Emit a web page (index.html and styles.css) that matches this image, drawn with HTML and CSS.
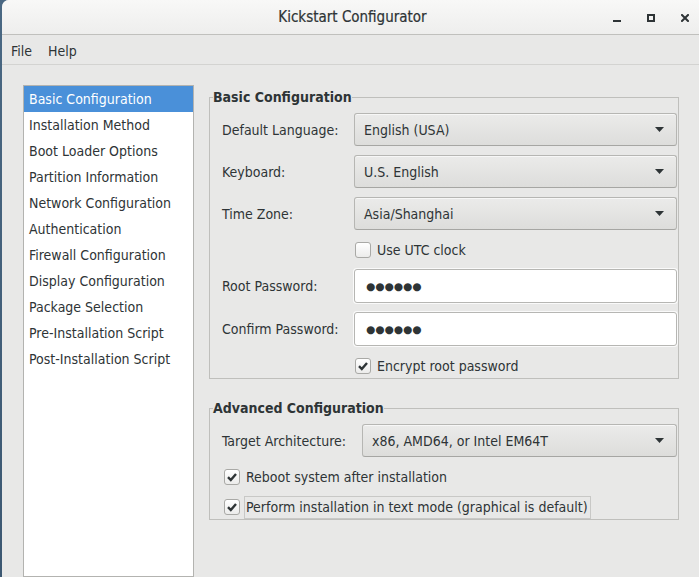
FILE: index.html
```html
<!DOCTYPE html>
<html lang="en">
<head>
<meta charset="utf-8">
<title>Kickstart Configurator</title>
<link rel="stylesheet" href="styles.css">
</head>
<body>
<div class="window">
  <header class="titlebar">
    <span class="title">Kickstart Configurator</span>
    <div class="wm-buttons">
      <svg class="wm-icon" width="8" height="8" viewBox="0 0 8 8"><rect x="0" y="6" width="8" height="2" fill="#2e3436"/></svg>
      <svg class="wm-icon" width="8" height="8" viewBox="0 0 8 8"><rect x="1" y="1" width="6" height="6" fill="none" stroke="#2e3436" stroke-width="2"/></svg>
      <svg class="wm-icon" width="8" height="8" viewBox="0 0 8 8"><path d="M1 1 L7 7 M7 1 L1 7" stroke="#2e3436" stroke-width="2" stroke-linecap="square"/></svg>
    </div>
  </header>
  <nav class="menubar">
    <span class="menu-item">File</span>
    <span class="menu-item">Help</span>
  </nav>
  <div class="content">
    <ul class="sidebar">
      <li class="selected">Basic Configuration</li>
      <li>Installation Method</li>
      <li>Boot Loader Options</li>
      <li>Partition Information</li>
      <li>Network Configuration</li>
      <li>Authentication</li>
      <li>Firewall Configuration</li>
      <li>Display Configuration</li>
      <li>Package Selection</li>
      <li>Pre-Installation Script</li>
      <li>Post-Installation Script</li>
    </ul>
    <div class="main">
      <fieldset class="frame">
        <legend>Basic Configuration</legend>
        <div class="form form-basic">
          <span class="label">Default Language:</span>
          <div class="combo"><span>English (USA)</span><svg class="arrow" width="9" height="5" viewBox="0 0 9 5"><polygon points="0,0 9,0 4.5,5" fill="#2e3436"/></svg></div>
          <span class="label">Keyboard:</span>
          <div class="combo"><span>U.S. English</span><svg class="arrow" width="9" height="5" viewBox="0 0 9 5"><polygon points="0,0 9,0 4.5,5" fill="#2e3436"/></svg></div>
          <span class="label">Time Zone:</span>
          <div class="combo"><span>Asia/Shanghai</span><svg class="arrow" width="9" height="5" viewBox="0 0 9 5"><polygon points="0,0 9,0 4.5,5" fill="#2e3436"/></svg></div>
          <div class="check-row in-field">
            <span class="check"></span><span class="check-label">Use UTC clock</span>
          </div>
          <span class="label">Root Password:</span>
          <div class="entry"><span class="dots">●●●●●●</span></div>
          <span class="label">Confirm Password:</span>
          <div class="entry"><span class="dots">●●●●●●</span></div>
          <div class="check-row in-field">
            <span class="check"><svg width="14" height="14" viewBox="0 0 14 14"><path d="M3 7.2 L5.8 10 L11 4" fill="none" stroke="#2e3436" stroke-width="2.4"/></svg></span><span class="check-label">Encrypt root password</span>
          </div>
        </div>
      </fieldset>
      <fieldset class="frame frame-adv">
        <legend>Advanced Configuration</legend>
        <div class="form form-adv">
          <span class="label">Target Architecture:</span>
          <div class="combo"><span>x86, AMD64, or Intel EM64T</span><svg class="arrow" width="9" height="5" viewBox="0 0 9 5"><polygon points="0,0 9,0 4.5,5" fill="#2e3436"/></svg></div>
          <div class="check-row full">
            <span class="check"><svg width="14" height="14" viewBox="0 0 14 14"><path d="M3 7.2 L5.8 10 L11 4" fill="none" stroke="#2e3436" stroke-width="2.4"/></svg></span><span class="check-label">Reboot system after installation</span>
          </div>
          <div class="check-row full">
            <span class="check"><svg width="14" height="14" viewBox="0 0 14 14"><path d="M3 7.2 L5.8 10 L11 4" fill="none" stroke="#2e3436" stroke-width="2.4"/></svg></span><span class="check-label focused">Perform installation in text mode (graphical is default)</span>
          </div>
        </div>
      </fieldset>
    </div>
  </div>
</div>
</body>
</html>
```
FILE: styles.css
```css
* { box-sizing: border-box; }

html, body {
  margin: 0;
  height: 577px;
  overflow: hidden;
}

body {
  background: linear-gradient(#4a6883, #3c5872);
  font-family: "DejaVu Sans Condensed", "DejaVu Sans", sans-serif;
  font-size: 14px;
  color: #2e3436;
}

.window {
  margin-left: 2px;
  height: 577px;
  background: #e8e8e7;
  border-top-left-radius: 7px;
  display: flex;
  flex-direction: column;
  overflow: hidden;
}

.titlebar {
  height: 35px;
  flex: none;
  border-bottom: 1px solid #c0c0bd;
  background: linear-gradient(#f8f8f7, #eeeeed);
  display: grid;
  grid-template-columns: 1fr auto 1fr;
  align-items: center;
}

.title {
  grid-column: 2;
  font-size: 15px;
  color: #2e3436;
  padding-left: 4px;
  -webkit-text-stroke: 0.2px #2e3436;
}

.wm-buttons {
  grid-column: 3;
  justify-self: end;
  display: flex;
  align-items: center;
  gap: 26px;
  padding-right: 10px;
  padding-top: 1px;
}

.wm-icon { display: block; }

.menubar {
  height: 30px;
  flex: none;
  border-bottom: 1px solid #d3d3d1;
  display: flex;
  align-items: center;
  gap: 16px;
  padding-left: 9px;
  padding-top: 2px;
}

.content {
  flex: 1;
  min-height: 0;
  display: flex;
  gap: 15px;
  padding: 20px 20px 0 21px;
}

.sidebar {
  list-style: none;
  margin: 0;
  padding: 0;
  width: 171px;
  flex: none;
  background: #fff;
  border: 1px solid #b3b3b0;
}

.sidebar li {
  height: 26px;
  line-height: 26px;
  padding-left: 5px;
  white-space: nowrap;
}

.sidebar li.selected {
  background: #4a90d9;
  color: #fff;
}

.main {
  width: 470px;
  flex: none;
}

.frame {
  margin: 4px 0 0;
  padding: 0;
  border: 1px solid #bfbfbc;
  min-width: 0;
}

.frame-adv {
  margin-top: 21px;
}

.frame legend {
  margin-left: 3px;
  padding: 0;
  font-weight: bold;
  line-height: 17px;
}

.form {
  display: grid;
  align-items: center;
  padding: 7px 1px 2px 12px;
}

.form-basic {
  grid-template-columns: 132px 1fr;
  grid-template-rows: 33px 33px 33px 21px 34px 34px 21px;
  row-gap: 9px;
}

.form-adv {
  grid-template-columns: 140px 1fr;
  grid-template-rows: 33px 32px 30px;
  padding-bottom: 0;
}

.label {
  white-space: nowrap;
}

.combo {
  height: 33px;
  display: flex;
  align-items: center;
  justify-content: space-between;
  padding: 0 12px 0 9px;
  border: 1px solid #b6b6b3;
  border-bottom-color: #a6a6a3;
  border-radius: 3px;
  background: linear-gradient(#ebebea, #dddddb);
  box-shadow: inset 0 1px rgba(255, 255, 255, 0.6);
}

.arrow { display: block; }

.entry {
  height: 34px;
  display: flex;
  align-items: center;
  padding-left: 11px;
  background: #fff;
  border: 1px solid #b6b6b3;
  border-radius: 3px;
  box-shadow: 0 0 0 1px #fafafa;
}

.dots {
  font-family: "DejaVu Sans", sans-serif;
  font-size: 10.6px;
  letter-spacing: 0;
}

.check-row {
  display: flex;
  align-items: center;
  height: 100%;
}

.check-row.in-field {
  grid-column: 2;
  padding-left: 1px;
}

.check-row.full {
  grid-column: 1 / 3;
  padding-left: 2px;
  height: 24px;
  align-self: end;
}

.check {
  width: 16px;
  height: 16px;
  flex: none;
  border: 1px solid #a9a9a6;
  border-radius: 3px;
  background: linear-gradient(#ffffff, #ececeb);
  display: flex;
  align-items: center;
  justify-content: center;
}

.check svg { display: block; }

.check-label {
  margin-left: 6px;
  white-space: nowrap;
}

.check-label.focused {
  margin-left: 4px;
  padding: 2px 2px 3px 1px;
  border: 1px solid #c8c8c6;
}
```
